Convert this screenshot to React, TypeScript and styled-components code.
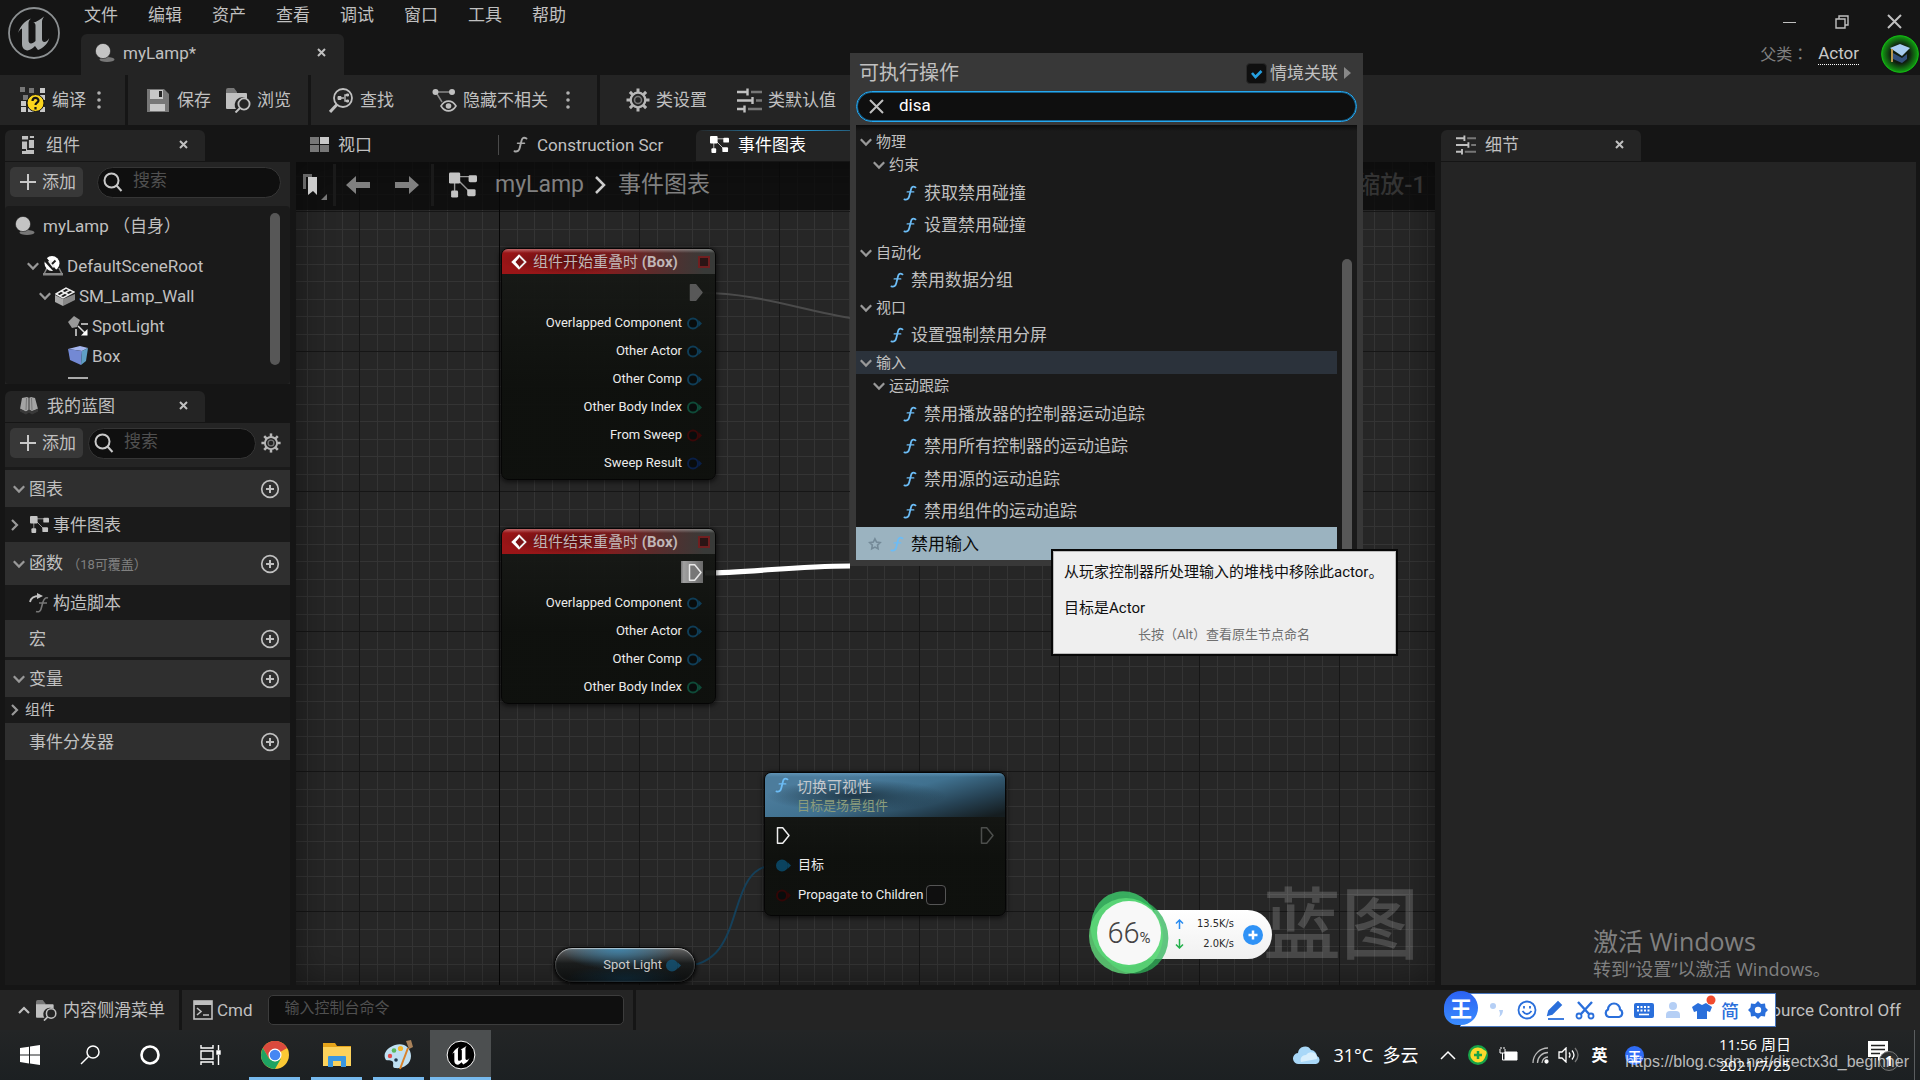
import React from "react";
import styled, { createGlobalStyle, css } from "styled-components";

const UI_FONT = `Roboto, "Noto Sans CJK SC", sans-serif`;
const WIN_FONT = `"Open Sans", "Noto Sans CJK SC", sans-serif`;

const Global = createGlobalStyle`
  * { box-sizing: border-box; }
  html, body { margin: 0; height: 100%; background: #151515; }
  body { font-family: ${UI_FONT}; font-size: 17px; line-height: 24px; color: #c0c0c0; overflow: hidden; }
  button { font: inherit; color: inherit; background: none; border: 0; padding: 0; margin: 0; text-align: left; white-space: nowrap; }
  input { font: inherit; color: inherit; margin: 0; }
  ul { list-style: none; margin: 0; padding: 0; }
  h2, p { margin: 0; font-weight: 400; }
  svg { display: block; flex: none; }
`;

/* ---------- shell ---------- */
const Shell = styled.div`
  position: relative;
  display: grid;
  grid-template-rows: 75px 50px minmax(0, 1fr) 40px 50px;
  height: 100vh;
  background: #151515;
  overflow: hidden;
`;
const Header = styled.header`
  display: flex;
`;
const LogoBox = styled.div`
  width: 81px;
  padding: 6px 0 0 7px;
`;
const HeaderLeft = styled.div`
  flex: 1;
  display: flex;
  flex-direction: column;
  justify-content: space-between;
`;
const MenuBar = styled.nav`
  display: flex;
  height: 30px;
  padding-left: 3px;
  gap: 30px;
  align-items: center;
`;
const HeaderRight = styled.div`
  display: flex;
  flex-direction: column;
  align-items: flex-end;
`;
const WindowButtons = styled.div`
  display: flex;
  height: 43px;
  padding: 0 18px 0 0;
  gap: 38px;
  align-items: center;
`;
const ParentClass = styled.div`
  display: flex;
  align-items: flex-start;
  gap: 10px;
  padding-right: 61px;
  font-family: Roboto, "Noto Sans CJK TC", sans-serif;
  font-size: 16px;
  color: #808080;
  a {
    color: #c8c8c8;
    font-size: 17px;
    line-height: 21px;
    text-decoration: none;
    border-bottom: 1px dotted #fff;
  }
`;
const TutorialBadge = styled.button`
  position: absolute;
  top: 35px;
  right: 1px;
`;

const TabShape = styled.div<{ $width: number }>`
  display: flex;
  align-items: center;
  width: ${(p) => p.$width}px;
  height: 31px;
  padding: 0 17px 2px 15px;
  gap: 9px;
  border-radius: 6px 6px 0 0;
  background: #242424;
  margin-bottom: 1px;
  > span { flex: 1; white-space: nowrap; overflow: hidden; }
`;
const DocTab = styled(TabShape)`
  height: 41px;
  padding: 0 18px 4px 14px;
  gap: 8px;
  margin: 0;
`;

/* ---------- toolbar ---------- */
const Toolbar = styled.div`
  display: flex;
  gap: 3px;
`;
const ToolGroup = styled.div<{ $pad: string; $gap: number; $grow?: boolean }>`
  display: flex;
  align-items: center;
  gap: ${(p) => p.$gap}px;
  padding: ${(p) => p.$pad};
  background: #242424;
  flex: ${(p) => (p.$grow ? "1" : "none")};
`;
const ToolButton = styled.button`
  display: flex;
  align-items: center;
  gap: 6px;
`;
const ToolPair = styled.div`
  display: flex;
  align-items: center;
  gap: 18px;
`;

/* ---------- main columns ---------- */
const Main = styled.main`
  display: grid;
  grid-template-columns: 285px minmax(0, 1fr) 475px;
  gap: 6px;
  padding: 5px 4px 5px 5px;
  min-height: 0;
`;
const Column = styled.section`
  display: flex;
  flex-direction: column;
  min-height: 0;
  min-width: 0;
`;
const ComponentsPanel = styled.div`
  display: flex;
  flex-direction: column;
  height: 222px;
  margin-bottom: 7px;
  background: #242424;
`;
const BlueprintPanel = styled.div`
  flex: 1;
  background: #1a1a1a;
`;
const SearchRow = styled.div`
  display: flex;
  align-items: center;
  height: 44px;
  padding: 0 9px 4px 5px;
  background: #242424;
`;
const AddButton = styled.button`
  display: flex;
  align-items: center;
  gap: 5px;
  width: 73px;
  height: 30px;
  padding-left: 9px;
  border-radius: 5px;
  background: #383838;
  flex: none;
`;
const SearchBox = styled.label<{ $ml: number }>`
  display: flex;
  align-items: center;
  flex: 1;
  min-width: 0;
  height: 31px;
  margin-left: ${(p) => p.$ml}px;
  padding: 0 5px;
  gap: 10px;
  border: 1px solid #353535;
  border-radius: 16px;
  background: #0f0f0f;
  input {
    flex: 1;
    min-width: 0;
    padding: 0 0 4px;
    border: 0;
    outline: 0;
    background: none;
    &::placeholder { color: #505050; opacity: 1; }
  }
`;
const TreeBox = styled.div`
  flex: 1;
  display: flex;
  min-height: 0;
  overflow: hidden;
  background: #1a1a1a;
  border-radius: 4px;
`;
const TreeList = styled.ul`
  flex: 1;
`;
const TreeItem = styled.li<{ $indent: number; $root?: boolean }>`
  display: flex;
  align-items: center;
  height: ${(p) => (p.$root ? 40 : 30)}px;
  margin-bottom: ${(p) => (p.$root ? 5 : 0)}px;
  padding-left: ${(p) => p.$indent}px;
  gap: ${(p) => (p.$root ? 8 : 4)}px;
  white-space: nowrap;
`;
const Thumb = styled.div<{ $h?: number; $mt: number; $mr: number }>`
  width: 10px;
  height: ${(p) => (p.$h ? `${p.$h}px` : "auto")};
  margin: ${(p) => `${p.$mt}px ${p.$mr}px 0 0`};
  border-radius: 5px;
  background: #575757;
`;
const Section = styled.div<{ $h: number; $head?: boolean; $pl: number; $gap?: number; $small?: boolean }>`
  display: flex;
  align-items: center;
  height: ${(p) => p.$h}px;
  padding: 0 10px 0 ${(p) => p.$pl}px;
  gap: ${(p) => p.$gap ?? 4}px;
  background: ${(p) => (p.$head ? "#2f2f2f" : "#1a1a1a")};
  font-size: ${(p) => (p.$small ? 15 : 17)}px;
  small { font-size: 13px; color: #808080; }
  > span { flex: 1; }
`;
const Divider = styled.div`
  height: 3px;
  background: #1a1a1a;
`;

/* ---------- graph ---------- */
const EditorTabs = styled.div`
  display: flex;
  height: 32px;
  align-items: flex-start;
`;
const EditorTab = styled.button<{ $w: number; $active?: boolean }>`
  display: flex;
  align-items: center;
  gap: 9px;
  width: ${(p) => p.$w}px;
  height: 31px;
  padding: 0 32px 2px 14px;
  border-radius: 6px 6px 0 0;
  > span { overflow: hidden; }
  ${(p) =>
    p.$active &&
    css`
      color: #fff;
      background:
        linear-gradient(90deg, transparent, #26a0e0 50%, transparent) top / 100% 1px no-repeat,
        #242424;
    `}
`;
const TabRule = styled.i`
  width: 1px;
  height: 20px;
  margin-top: 5px;
  background: #4a4a4a;
`;
const Canvas = styled.div`
  position: relative;
  flex: 1;
  overflow: hidden;
  background:
    linear-gradient(#060606, #060606) 203px 0 / 1px 100% no-repeat,
    linear-gradient(90deg, #161616 1px, transparent 1px) 63px 0 / 140px 100%,
    linear-gradient(#161616 1px, transparent 1px) 0 49px / 100% 140px,
    linear-gradient(90deg, #343434 1px, transparent 1px 18px, #343434 18px 19px, transparent 19px) 28px 0 / 35px 100%,
    linear-gradient(#343434 1px, transparent 1px 18px, #343434 18px 19px, transparent 19px) 0 14px / 100% 35px,
    #262626;
`;
const Vignette = styled.div`
  position: absolute;
  inset: 0;
  box-shadow: inset 0 0 36px rgba(0, 0, 0, 0.45);
`;
const GraphTitle = styled.div`
  position: absolute;
  inset: 0 0 auto 0;
  display: flex;
  align-items: center;
  height: 48px;
  padding: 0 9px 2px 7px;
  background: rgba(8, 8, 8, 0.75);
  font-size: 23px;
  line-height: 30px;
  color: #808080;
`;
const TitleIcon = styled.div<{ $ml?: number }>`
  margin-left: ${(p) => p.$ml ?? 0}px;
`;
const TitleRule = styled.i<{ $ml: number }>`
  width: 3px;
  height: 42px;
  margin-left: ${(p) => p.$ml}px;
  background: #1a1a1a;
`;
const Crumb = styled.span<{ $ml: number }>`
  margin-left: ${(p) => p.$ml}px;
`;
const ZoomLabel = styled.span`
  margin-left: auto;
  font-weight: 500;
  font-size: 24px;
  color: #333;
`;
const Wires = styled.svg`
  position: absolute;
  left: 0;
  top: 0;
  width: 100%;
  height: 100%;
`;
const Node = styled.article<{ $x: number; $y: number; $w: number }>`
  position: absolute;
  left: ${(p) => p.$x}px;
  top: ${(p) => p.$y}px;
  width: ${(p) => p.$w}px;
  border: 1px solid #050505;
  border-radius: 7px;
  background: linear-gradient(rgba(24, 26, 23, 0.94), rgba(14, 16, 13, 0.97) 60%);
  box-shadow: 0 1px 5px 1px rgba(0, 0, 0, 0.6);
  color: #ececec;
  font-size: 13px;
  line-height: 20px;
  overflow: hidden;
`;
const EventHead = styled.header`
  display: flex;
  align-items: center;
  height: 25px;
  padding: 0 5px 0 9px;
  gap: 6px;
  font-size: 15px;
  color: #c0b6b6;
  background:
    linear-gradient(rgba(255, 255, 255, 0.35), transparent 4px),
    radial-gradient(ellipse 70px 14px at 32% 45%, rgba(50, 5, 5, 0.6), transparent),
    linear-gradient(95deg, #9b1517 5%, #8b1a1c 45%, #5b2c2c 72%, #383a38 95%);
  > span { flex: 1; }
`;
const DelegatePin = styled.i`
  width: 12px;
  height: 12px;
  border: 2px solid #701f20;
  background: #2b1515;
`;
const NodeBody = styled.div`
  padding: 4px 0 2px;
`;
const ExecRow = styled.div`
  display: flex;
  justify-content: flex-end;
  align-items: center;
  height: 31px;
  padding: 0 12px 3px 0;
`;
const ExecSelected = styled.span`
  display: flex;
  justify-content: flex-end;
  align-items: center;
  width: 22px;
  height: 22px;
  padding-right: 1px;
  background: linear-gradient(90deg, #777, #a0a0a0 12%, #6a6a6a);
`;
const PinRow = styled.div`
  display: flex;
  justify-content: flex-end;
  align-items: center;
  height: 28px;
  padding-right: 13px;
  gap: 5px;
`;
const FuncHead = styled.header`
  display: flex;
  height: 44px;
  padding: 4px 10px 0 10px;
  gap: 8px;
  color: #c4c8cc;
  font-size: 15px;
  background:
    linear-gradient(rgba(140, 200, 240, 0.3), transparent 4px),
    radial-gradient(ellipse 90px 16px at 38% 52%, rgba(20, 35, 45, 0.75), transparent),
    linear-gradient(165deg, #4c7c9c 20%, #40718f 50%, #264254 75%, #151d20 96%);
  small { display: block; font-size: 13px; line-height: 18px; color: #8b9c7c; }
`;
const FuncBody = styled.div`
  padding: 3px 12px 5px 11px;
`;
const FuncRow = styled.div`
  display: flex;
  align-items: center;
  height: 30px;
  gap: 7px;
`;
const NodeCheck = styled.input`
  appearance: none;
  width: 20px;
  height: 20px;
  border: 1px solid #555;
  border-radius: 4px;
  background: #0f0f0f;
`;
const PinLabel = styled.label`
  display: flex;
  align-items: center;
  gap: 3px;
`;
const VarNode = styled.article`
  position: absolute;
  left: 258px;
  top: 785px;
  display: flex;
  align-items: center;
  justify-content: flex-end;
  gap: 4px;
  width: 142px;
  height: 36px;
  padding-right: 14px;
  border: 1px solid #050505;
  border-radius: 18px;
  background:
    radial-gradient(ellipse 58px 22px at 45% 0, rgba(60, 140, 185, 0.85), transparent),
    radial-gradient(ellipse 60px 14px at 50% 90%, rgba(15, 50, 70, 0.7), transparent),
    linear-gradient(#666 0, #3c3e3f 25%, #1c1e1e 45%, #101212);
  box-shadow: inset 0 1px 1px rgba(255, 255, 255, 0.5), inset 0 0 2px rgba(255, 255, 255, 0.4), 0 1px 4px #000;
  color: #d8d8d8;
  font-size: 13px;
`;
const BlueprintMark = styled.div`
  position: absolute;
  right: 16px;
  bottom: 16px;
  font: 500 78px/100px "Noto Sans CJK SC", sans-serif;
  color: rgba(255, 255, 255, 0.17);
`;
const Details = styled.div`
  flex: 1;
  background: #242424;
`;

/* ---------- status bar ---------- */
const StatusBar = styled.footer`
  display: flex;
  gap: 3px;
`;
const StatusGroup = styled.div<{ $pad: string; $gap: number; $grow?: boolean }>`
  display: flex;
  align-items: center;
  gap: ${(p) => p.$gap}px;
  padding: ${(p) => p.$pad};
  background: #242424;
  flex: ${(p) => (p.$grow ? "1" : "none")};
  justify-content: ${(p) => (p.$grow ? "flex-end" : "flex-start")};
`;
const Console = styled.input`
  width: 356px;
  height: 30px;
  margin-left: 11px;
  padding: 0 16px 4px;
  border: 1px solid #3c3c3c;
  border-radius: 5px;
  background: #0f0f0f;
  font-size: 15px;
  &::placeholder { color: #505050; opacity: 1; }
`;

/* ---------- action menu ---------- */
const Menu = styled.section`
  position: absolute;
  left: 850px;
  top: 53px;
  width: 513px;
  height: 513px;
  display: flex;
  flex-direction: column;
  padding: 0 6px 6px;
  background: #383838;
`;
const MenuHead = styled.div`
  display: flex;
  align-items: center;
  height: 38px;
  padding: 2px 6px 0 3px;
  h2 { flex: 1; font-size: 20px; line-height: 28px; }
`;
const ContextLabel = styled.label`
  display: flex;
  align-items: center;
  gap: 3px;
  margin-right: 6px;
`;
const ContextCheck = styled.input`
  appearance: none;
  width: 21px;
  height: 21px;
  border: 1px solid #2a2a2a;
  border-radius: 4px;
  background: #0f0f0f url("data:image/svg+xml,%3Csvg xmlns='http://www.w3.org/2000/svg' viewBox='0 0 19 19'%3E%3Cpath d='M5 9l3.500 4 6-6' fill='none' stroke='%2326a0e0' stroke-width='2.600'/%3E%3C/svg%3E") center / 19px 19px;
`;
const MenuSearch = styled.label`
  display: flex;
  align-items: center;
  height: 31px;
  margin-bottom: 3px;
  padding: 0 12px;
  gap: 15px;
  border: 1px solid #26a8f0;
  box-shadow: inset 0 0 0 1px #14608c;
  border-radius: 16px;
  background: #0f0f0f;
  input { flex: 1; border: 0; outline: 0; padding: 0 0 3px; background: none; color: #fff; }
`;
const MenuBody = styled.div`
  flex: 1;
  display: flex;
  min-height: 0;
  overflow: hidden;
  background: linear-gradient(#0c0c0c, #1a1a1a 6px);
`;
const MenuList = styled.ul`
  flex: 1;
  padding-top: 5px;
  margin-right: 5px;
`;
const Category = styled.li<{ $level: number; $hot?: boolean }>`
  display: flex;
  align-items: center;
  gap: 4px;
  height: 23px;
  padding-left: ${(p) => 4 + p.$level * 13}px;
  font-size: 15px;
  background: ${(p) => (p.$hot ? "#2b323b" : "none")};
`;
const Action = styled.li<{ $level: number; $picked?: boolean }>`
  display: flex;
  align-items: center;
  height: 33px;
  padding-left: ${(p) => (p.$picked ? 12 : 21 + p.$level * 13)}px;
  gap: 7px;
  color: ${(p) => (p.$picked ? "#0b0b0b" : "#c0c0c0")};
  background: ${(p) => (p.$picked ? "#9bb3c0" : "none")};
  &:nth-child(even) { height: 32px; }
`;
const Tooltip = styled.div`
  position: absolute;
  left: 1051px;
  top: 549px;
  width: 347px;
  padding: 9px 12px 8px 11px;
  border: 2px solid #080808;
  background: #efefef;
  box-shadow: inset 0 0 0 1px #bbb;
  color: #101010;
  font-size: 15px;
  line-height: 24px;
  white-space: nowrap;
  p + p { margin-top: 12px; }
  small { display: block; margin-top: 4px; font-size: 13px; line-height: 22px; text-align: center; color: #707070; }
`;

/* ---------- desktop overlays ---------- */
const Activate = styled.div`
  position: absolute;
  left: 1593px;
  top: 924px;
  font: 25px/34px ${WIN_FONT};
  color: #808080;
  small { display: block; font-size: 18px; line-height: 22px; }
`;
const SpeedWidget = styled.div`
  position: absolute;
  left: 1088px;
  top: 889px;
  width: 184px;
  height: 88px;
`;
const SpeedPill = styled.div`
  position: absolute;
  inset: 21px 0 18px 40px;
  display: flex;
  align-items: center;
  justify-content: flex-end;
  gap: 9px;
  padding-right: 9px;
  border-radius: 25px;
  background: linear-gradient(#fff, #f0f0f0);
  color: #2a2a2a;
`;
const SpeedLines = styled.div`
  display: grid;
  grid-template-columns: 9px 50px;
  align-items: center;
  padding-bottom: 2px;
  font: 11px/20px "DejaVu Sans Condensed", "DejaVu Sans", sans-serif;
  text-align: right;
`;
const SpeedDial = styled.div`
  position: absolute;
  inset: 12px auto auto 9px;
  width: 64px;
  height: 64px;
  display: flex;
  align-items: baseline;
  justify-content: center;
  padding-top: 12px;
  border-radius: 50%;
  background: #f8f8f8;
  font: 300 29px/40px Roboto, sans-serif;
  color: #444;
  small { font-size: 15px; font-weight: 400; }
`;
const SpeedRing = styled.svg`
  position: absolute;
  left: 0;
  top: 0;
`;
const ImeBar = styled.div`
  position: absolute;
  left: 1460px;
  top: 993px;
  width: 316px;
  height: 34px;
  display: flex;
  align-items: center;
  padding: 0 7px 0 27px;
  justify-content: space-between;
  border: 1px solid #4a78c0;
  background: #fff;
  color: #2a6fdb;
`;
const ImeLogo = styled.div`
  position: absolute;
  left: -17px;
  top: -3px;
  width: 34px;
  height: 34px;
  border-radius: 50% 50% 50% 40%;
  background: linear-gradient(#2c62f2, #3a8cff);
  color: #fff;
  font: 700 22px/33px "Noto Sans CJK SC", sans-serif;
  text-align: center;
`;
const ImeMode = styled.span`
  font: 500 18px/24px "Noto Sans CJK SC", sans-serif;
`;
const Taskbar = styled.footer`
  position: relative;
  display: flex;
  align-items: stretch;
  background: linear-gradient(#232526, #1c2022);
  color: #fff;
  font-family: ${WIN_FONT};
`;
const TaskButton = styled.button<{ $w: number; $open?: boolean; $active?: boolean; $ml?: number }>`
  display: flex;
  align-items: center;
  justify-content: center;
  width: ${(p) => p.$w}px;
  margin-left: ${(p) => p.$ml ?? 0}px;
  border-bottom: 3px solid ${(p) => (p.$open ? "#76b9ed" : "transparent")};
  padding-top: 3px;
  background: ${(p) => (p.$active ? "#4c4f50" : "none")};
  background-clip: padding-box;
`;
const Tray = styled.div`
  margin-left: auto;
  display: flex;
  align-items: center;
  padding-right: 5px;
  font-size: 18px;
`;
const TrayItem = styled.span<{ $w: number }>`
  display: flex;
  justify-content: center;
  width: ${(p) => p.$w}px;
  white-space: pre;
`;
const InputMode = styled(TrayItem)`
  font-size: 16px;
  font-weight: 700;
`;
const TrayBadge = styled.span`
  width: 19px;
  height: 19px;
  border-radius: 50%;
  background: #2f6cf6;
  font: 700 13px/19px "Noto Sans CJK SC", sans-serif;
  text-align: center;
`;
const Clock = styled.div`
  width: 112px;
  margin-left: 42px;
  font-size: 15px;
  line-height: 21px;
  text-align: center;
`;
const Notice = styled.div`
  display: flex;
  justify-content: flex-end;
  width: 103px;
  padding-right: 14px;
`;
const ShowDesktop = styled.div`
  width: 1px;
  height: 50px;
  background: #5a5d5f;
`;
const BlogMark = styled.div`
  position: absolute;
  right: 11px;
  bottom: 7px;
  font: 16px/22px "Liberation Sans", sans-serif;
  color: rgba(255, 255, 255, 0.7);
`;

/* ---------- icons ---------- */
const Chevron = ({ dir = "down", color = "#999" }: { dir?: "down" | "right" | "up"; color?: string }) => (
  <svg width="12" height="12" viewBox="0 0 12 12" fill="none" stroke={color} strokeWidth="2.200">
    <path d={dir === "down" ? "M.8 3.200L6 8.600l5.200-5.400" : dir === "up" ? "M1 9l5-5 5 5" : "M3 1l5 5-5 5"} />
  </svg>
);
const Close = ({ size = 9, w = 2 }: { size?: number; w?: number }) => (
  <svg width={size} height={size} viewBox={`0 0 ${size} ${size}`} stroke="currentColor" strokeWidth={w}>
    <path d={`M1 1L${size - 1} ${size - 1}M${size - 1} 1L1 ${size - 1}`} />
  </svg>
);
const FuncIcon = ({ color = "#6cbcf5", size = 15 }: { color?: string; size?: number }) => (
  <svg width={size} height={size + 2} viewBox="0 0 15 17" fill="none" stroke={color} strokeWidth="1.900" strokeLinecap="round">
    <path d="M13.500 2.500c-2.600-1.600-4.300-.6-4.900 1.900L6.700 12c-.6 2.600-2.200 4-5.200 3.300" />
    <path d="M4.500 7.300h7" strokeWidth="1.500" />
  </svg>
);
const Sphere = () => (
  <svg width="20" height="20" viewBox="0 0 20 20">
    <ellipse cx="12" cy="16.500" rx="7.500" ry="2.600" fill="#777" />
    <circle cx="8" cy="8" r="7.600" fill="#c4c4c4" stroke="#1c1c1c" strokeWidth=".6" />
  </svg>
);
const Magnifier = () => (
  <svg width="20" height="20" viewBox="0 0 20 20" fill="none" stroke="#c8c8c8" strokeWidth="2">
    <circle cx="8.500" cy="8.500" r="7" />
    <path d="M13.500 13.500l5 5.500" />
  </svg>
);
const Plus = () => (
  <svg width="18" height="18" viewBox="0 0 18 18" stroke="#c8c8c8" strokeWidth="2">
    <path d="M9 1v16M1 9h16" />
  </svg>
);
const PlusRing = () => (
  <svg width="20" height="20" viewBox="0 0 20 20" stroke="#c0c0c0" strokeWidth="1.700" fill="none">
    <circle cx="10" cy="10" r="8.300" />
    <path d="M10 6v8M6 10h8" strokeWidth="2" />
  </svg>
);
const Gear = ({ size = 24 }: { size?: number }) => (
  <svg width={size} height={size} viewBox="0 0 24 24" fill="none" stroke="#b8b8b8">
    <circle cx="12" cy="12" r="7.300" strokeWidth="2.300" />
    <circle cx="12" cy="12" r="3.500" strokeWidth="1.600" stroke="#777" />
    {[0, 45, 90, 135, 180, 225, 270, 315].map((a) => (
      <path key={a} d="M12 .5v4" strokeWidth="3" transform={`rotate(${a} 12 12)`} />
    ))}
  </svg>
);
const Dots = () => (
  <svg width="4" height="20" viewBox="0 0 4 20" fill="#b0b0b0">
    <circle cx="2" cy="3" r="1.800" /><circle cx="2" cy="10" r="1.800" /><circle cx="2" cy="17" r="1.800" />
  </svg>
);
const Sliders = ({ size = 25 }: { size?: number }) => (
  <svg width={size} height={size} viewBox="0 0 25 25" strokeWidth="2.400">
    <path d="M14 4h11M19 12.500h6M11 21h14" stroke="#777" />
    <path d="M0 4h10M0 12.500h15M0 21h7M10.500 .5v7M15.500 9v7M7.500 17.500v7" stroke="#c0c0c0" />
  </svg>
);
const GraphIcon = ({ w = 19, color = "#c4c4c4" }: { w?: number; color?: string }) => (
  <svg width={w} height={w} viewBox="0 0 20 20" fill={color}>
    <path d="M4 4h13M4 4v13M5 5l11 11" stroke={color} strokeWidth="1" fill="none" opacity=".75" />
    <rect x="0" y="1" width="8" height="8" rx="1" />
    <rect x="14" y="3" width="6" height="5" rx="1" /><rect x="1.500" y="14" width="5" height="5" rx="1" /><rect x="13" y="13" width="6" height="5" rx="1" />
  </svg>
);
const FolderSearch = ({ size = 25 }: { size?: number }) => (
  <svg width={size} height={size} viewBox="0 0 25 25">
    <path d="M0 6V2q0-2 2-2h6l3 4v2z" fill="#777" />
    <path d="M0 5h20q1 0 1 1v5a7.500 7.500 0 00-11 10H1q-1 0-1-1z" fill="#c0c0c0" />
    <circle cx="18" cy="16" r="5.600" fill="#242424" stroke="#c0c0c0" strokeWidth="1.800" />
    <path d="M14 20l-4.500 4.500" stroke="#c0c0c0" strokeWidth="2" />
  </svg>
);
const ExecPin = ({ fill = "none", stroke = "#eee" }: { fill?: string; stroke?: string }) => (
  <svg width="14" height="17" viewBox="0 0 14 17">
    <path d="M1.500 .8h5.200L13 8.500l-6.300 7.700H1.500z" fill={fill} stroke={stroke} strokeWidth="1.500" strokeLinejoin="round" />
  </svg>
);
const DataPin = ({ color, filled }: { color: string; filled?: boolean }) => (
  <svg width="15" height="13" viewBox="0 0 15 13">
    <circle cx="6" cy="6.500" r="5" stroke={color} strokeWidth="2" fill={filled ? color : "#090c0c"} />
    <path d="M11.500 3l3.500 3.500-3.500 3.500z" fill={color} />
  </svg>
);
const EngineU = ({ size, fill, ring, bg = "none" }: { size: number; fill: string; ring: string; bg?: string }) => (
  <svg width={size} height={size} viewBox="0 0 54 54">
    <circle cx="27" cy="27" r="25" fill={bg} stroke={ring} strokeWidth="1.800" />
    <path
      fill={fill}
      d="M11 27C13 20 18 15 24 12.500c-2 2-2.500 3-2.500 5V34c0 2 .8 3.500 2.500 3.500 1.500 0 3-1 4.500-2.500V19.500c0-1.500-.6-2.500-2.200-2.700C30 15.500 33.500 13.500 37 10.500c-1.500 2.500-2 3.500-2 5.500v17c0 2 1 3 2.300 3 1.800 0 3.500-1.500 5-4-1.500 6-6.300 10-11.300 12l-3-4c-2 2-4 4-7.500 4.500-3.500-.5-5.500-3-5.500-6.500V22.500c-1.500.5-2.800 2-4 4.500z"
    />
  </svg>
);
const CompileIcon = () => (
  <svg width="26" height="26" viewBox="0 0 26 26">
    <g fill="#777"><path d="M0 0h5v5H0zM9 1h5v5H9zM3 8h5v5H3z" /></g>
    <g fill="#c8c8c8"><path d="M20 1h5v5h-5zM11 8h5v5h-5zM19 8h6v5h-6zM1 14h5v5H1zM1 20h5v5H1zM8 20h6v5H8zM20 20h5v5h-5z" /></g>
    <circle cx="15.500" cy="16" r="8.500" fill="#fbd51d" stroke="#151515" />
    <path d="M12.500 14c0-4 6-4 6-.5 0 2-3 2.300-3 4.500M15.500 20v2.500" fill="none" stroke="#151515" strokeWidth="2.200" />
  </svg>
);
const SaveIcon = () => (
  <svg width="24" height="23" viewBox="0 0 24 23">
    <path d="M0 0h17l5 5v18H0z" fill="#777" />
    <path d="M3 1h13v9H3zM3 15h15v7H3z" fill="#c8c8c8" />
    <path d="M12 2h3v6h-3z" fill="#242424" />
  </svg>
);
const FindIcon = () => (
  <svg width="25" height="25" viewBox="0 0 25 25" fill="none" stroke="#c0c0c0">
    <circle cx="14" cy="10" r="9" strokeWidth="1.800" />
    <path d="M8 16.500L1 24" strokeWidth="3" />
    <path d="M11 10h4M18.500 7H16v6h2.500" strokeWidth="1.400" />
    <path d="M9 8.500h3v3H9zM17.500 6h2v2h-2zM17.500 12h2v2h-2z" fill="#c0c0c0" strokeWidth="1" />
  </svg>
);
const HideIcon = () => (
  <svg width="25" height="25" viewBox="0 0 25 25" fill="none" stroke="#c0c0c0">
    <path d="M3 4h16M5 6l5 8" strokeWidth="1.500" stroke="#888" />
    <circle cx="3.500" cy="4" r="3" fill="#c0c0c0" stroke="none" /><circle cx="20" cy="4" r="3" fill="#c0c0c0" stroke="none" />
    <path d="M9 18c4-6.500 11-6.500 15 0-4 6.500-11 6.500-15 0z" strokeWidth="1.600" />
    <circle cx="16.500" cy="18" r="2.800" fill="#c0c0c0" stroke="none" />
  </svg>
);
const ComponentsIcon = () => (
  <svg width="17" height="18" viewBox="0 0 17 18">
    <path d="M2 0h12v18H2z" fill="#c0c0c0" />
    <path d="M2 4.500h6V13h6M9 0v3h5M2 14h4" fill="none" stroke="#242424" strokeWidth="1.800" />
  </svg>
);
const BookIcon = () => (
  <svg width="18" height="18" viewBox="0 0 18 18">
    <path d="M2 1l5-1 2 1 2-1 4 1 3 11-6 2-3-1-3 2-6-3z" fill="#a4a4a4" />
    <path d="M6.500 1L6 13M11.500 1l.5 12" stroke="#777" />
    <path d="M9 1v12M0 12l6 3 3-2 3 2 6-3v2l-6 3-3-2-3 2-6-3z" stroke="#3a3a3a" fill="#3a3a3a" />
  </svg>
);
const ViewportIcon = () => (
  <svg width="19" height="15" viewBox="0 0 19 15" fill="#777">
    <path d="M0 0h9v7H0zM0 8h9v7H0zM10 8h9v7h-9z" /><path d="M10 0h9v7h-9z" fill="#c8c8c8" />
  </svg>
);
const SceneRootIcon = () => (
  <svg width="20" height="20" viewBox="0 0 20 20">
    <path d="M4 12L1 18M16 12l3 6" stroke="#888" strokeWidth="1.500" />
    <path d="M0 17h20v2.500H0z" fill="#888" />
    <circle cx="9" cy="7.500" r="7.500" fill="#fff" />
    <path d="M1 5l10 11h4L3 1z" fill="#1a1a1a" />
    <path d="M5 5.500L8 4l4 6-2 2z" fill="#eee" />
    <path d="M9 8l3.500-3.500" stroke="#1a1a1a" strokeWidth="2" />
  </svg>
);
const MeshIcon = () => (
  <svg width="20" height="19" viewBox="0 0 20 19">
    <path d="M0 8l8 4v7l-8-4z" fill="#aaa" /><path d="M8 12l12-5v6L8 19z" fill="#888" />
    <path d="M1 7l10-6 8 4-11 6zM6 4l8 4M4.500 9L15 3" fill="none" stroke="#eee" strokeWidth="1.500" />
  </svg>
);
const SpotIcon = () => (
  <svg width="20" height="20" viewBox="0 0 20 20">
    <path d="M6 0l6 4-3 7-5 1L0 6z" fill="#999" />
    <path d="M13 8h7M8 13v7M10 10l7 7" stroke="#ddd" strokeWidth="1.500" /><path d="M19.500 13v6.500H13z" fill="#fff" />
  </svg>
);
const BoxIcon = () => (
  <svg width="20" height="20" viewBox="0 0 20 20">
    <path d="M0 3l12-3 8 2-6 3z" fill="#a5b6ee" /><path d="M0 3l14 2-1 14L2 14z" fill="#7389d4" /><path d="M14 5l6-3-2 13-5 4z" fill="#5f9fc4" />
  </svg>
);
const OverrideIcon = () => (
  <svg width="20" height="20" viewBox="0 0 20 20" fill="none">
    <path d="M1 9c1-5 5-6 9-6" stroke="#c4c4c4" strokeWidth="1.800" /><path d="M8 0l6 3-6 3z" fill="#c4c4c4" />
    <path d="M19 5c-3-1-4 1-5 4l-2 7c-.6 2-2 3.500-5 2.500M10 10h8" stroke="#777" strokeWidth="1.600" />
  </svg>
);
const Star = () => (
  <svg width="15" height="14" viewBox="0 0 26 24" fill="none" stroke="#748a98" strokeWidth="2.800">
    <path d="M12 3l2.800 5.700 6.200.9-4.500 4.400 1 6.200L12 17.300l-5.500 2.900 1-6.200L3 9.600l6.200-.9z" />
  </svg>
);
const TerminalIcon = () => (
  <svg width="20" height="20" viewBox="0 0 20 20" fill="none" stroke="#c0c0c0">
    <rect x="1" y="1" width="18" height="18" strokeWidth="1.600" /><path d="M1 3h18" strokeWidth="4" />
    <path d="M4 8l4 3.500L4 15M10 15h6" strokeWidth="1.600" />
  </svg>
);

const imeProps = { width: 20, height: 20, viewBox: "0 0 20 20", fill: "none", stroke: "currentColor", strokeWidth: 1.8 };

/* ---------- data ---------- */
const blue = "#0f3d57";
const overlapPins: [string, string][] = [
  ["Overlapped Component", blue],
  ["Other Actor", blue],
  ["Other Comp", blue],
  ["Other Body Index", "#0f4a38"],
  ["From Sweep", "#3a0808"],
  ["Sweep Result", "#0a1f47"],
];
type Entry = { t: string; cat?: boolean; level: number; hot?: boolean; picked?: boolean };
const entries: Entry[] = [
  { t: "物理", cat: true, level: 0 },
  { t: "约束", cat: true, level: 1 },
  { t: "获取禁用碰撞", level: 2 },
  { t: "设置禁用碰撞", level: 2 },
  { t: "自动化", cat: true, level: 0 },
  { t: "禁用数据分组", level: 1 },
  { t: "视口", cat: true, level: 0 },
  { t: "设置强制禁用分屏", level: 1 },
  { t: "输入", cat: true, level: 0, hot: true },
  { t: "运动跟踪", cat: true, level: 1 },
  { t: "禁用播放器的控制器运动追踪", level: 2 },
  { t: "禁用所有控制器的运动追踪", level: 2 },
  { t: "禁用源的运动追踪", level: 2 },
  { t: "禁用组件的运动追踪", level: 2 },
  { t: "禁用输入", level: 1, picked: true },
];

const EventNode = ({ y, title, pins, selected }: { y: number; title: string; pins: [string, string][]; selected?: boolean }) => (
  <Node $x={205} $y={y} $w={215}>
    <EventHead>
      <svg width="16" height="16" viewBox="0 0 16 16">
        <path d="M8 1.500l6.500 6.500L8 14.500 1.500 8z" fill="#7a1214" stroke="#eee" strokeWidth="1.800" />
        <path d="M8 1L1 8l7 7V12L4.500 8 8 4z" fill="#fff" />
      </svg>
      <span>{title} <b>(Box)</b></span>
      <DelegatePin />
    </EventHead>
    <NodeBody>
      <ExecRow>
        {selected ? <ExecSelected><ExecPin stroke="#e8e8e8" fill="#777" /></ExecSelected> : <ExecPin fill="#585858" stroke="#585858" />}
      </ExecRow>
      {pins.map(([label, color]) => (
        <PinRow key={label}>{label}<DataPin color={color} /></PinRow>
      ))}
    </NodeBody>
  </Node>
);

export default function App() {
  return (
    <Shell>
      <Global />
      <Header>
        <LogoBox><EngineU size={54} fill="#a4a8aa" ring="#8c9092" /></LogoBox>
        <HeaderLeft>
          <MenuBar>
            {["文件", "编辑", "资产", "查看", "调试", "窗口", "工具", "帮助"].map((m) => <button key={m}>{m}</button>)}
          </MenuBar>
          <DocTab $width={263}><Sphere /><span>myLamp*</span><button aria-label="关闭"><Close /></button></DocTab>
        </HeaderLeft>
        <HeaderRight>
          <WindowButtons>
            <button aria-label="最小化"><svg width="14" height="14" stroke="#c0c0c0"><path d="M0 7.500h13" /></svg></button>
            <button aria-label="还原"><svg width="14" height="14" fill="none" stroke="#c0c0c0" strokeWidth="1.400"><path d="M1 4h9v9H1zM4 4V1h9v9h-3" /></svg></button>
            <button aria-label="关闭窗口"><Close size={15} w={2} /></button>
          </WindowButtons>
          <ParentClass>父类：<a href="#actor">Actor</a></ParentClass>
        </HeaderRight>
      </Header>

      <Toolbar>
        <ToolGroup $pad="0 24px 0 20px" $gap={11}>
          <ToolButton><CompileIcon />编译</ToolButton>
          <button aria-label="编译选项"><Dots /></button>
        </ToolGroup>
        <ToolGroup $pad="0 17px 0 19px" $gap={15}>
          <ToolButton><SaveIcon />保存</ToolButton>
          <ToolButton><FolderSearch />浏览</ToolButton>
        </ToolGroup>
        <ToolGroup $pad="0 27px 0 18px" $gap={38}>
          <ToolButton><FindIcon />查找</ToolButton>
          <ToolPair>
            <ToolButton><HideIcon />隐藏不相关</ToolButton>
            <button aria-label="隐藏选项"><Dots /></button>
          </ToolPair>
        </ToolGroup>
        <ToolGroup $pad="0 0 0 26px" $gap={30} $grow>
          <ToolButton><Gear />类设置</ToolButton>
          <ToolButton><Sliders />类默认值</ToolButton>
        </ToolGroup>
      </Toolbar>

      <Main>
        <Column>
          <TabShape $width={200}><ComponentsIcon /><span>组件</span><button aria-label="关闭组件"><Close /></button></TabShape>
          <ComponentsPanel>
            <SearchRow>
              <AddButton><Plus />添加</AddButton>
              <SearchBox $ml={14}><Magnifier /><input placeholder="搜索" aria-label="搜索组件" /></SearchBox>
            </SearchRow>
            <TreeBox>
              <TreeList>
                <TreeItem $indent={10} $root><Sphere />myLamp （自身）</TreeItem>
                <TreeItem $indent={22}><Chevron /><SceneRootIcon />DefaultSceneRoot</TreeItem>
                <TreeItem $indent={34}><Chevron /><MeshIcon />SM_Lamp_Wall</TreeItem>
                <TreeItem $indent={63}><SpotIcon />SpotLight</TreeItem>
                <TreeItem $indent={63}><BoxIcon />Box</TreeItem>
                <TreeItem $indent={63}><svg width="20" height="18" stroke="#aaa" fill="none" strokeWidth="2"><path d="M0 1h20" /></svg></TreeItem>
              </TreeList>
              <Thumb $h={152} $mt={7} $mr={10} />
            </TreeBox>
          </ComponentsPanel>

          <TabShape $width={200}><BookIcon /><span>我的蓝图</span><button aria-label="关闭我的蓝图"><Close /></button></TabShape>
          <BlueprintPanel>
            <SearchRow>
              <AddButton><Plus />添加</AddButton>
              <SearchBox $ml={5}><Magnifier /><input placeholder="搜索" aria-label="搜索蓝图" /></SearchBox>
              <TitleIcon $ml={5}><Gear size={20} /></TitleIcon>
            </SearchRow>
            <Divider />
            <Section $h={37} $head $pl={8}><Chevron /><span>图表</span><button aria-label="添加图表"><PlusRing /></button></Section>
            <Section $h={35} $pl={4} $gap={0}><Chevron dir="right" /><TitleIcon $ml={9}><GraphIcon /></TitleIcon><Crumb $ml={4}>事件图表</Crumb></Section>
            <Section $h={43} $head $pl={8}><Chevron /><span>函数 <small>（18可覆盖）</small></span><button aria-label="添加函数"><PlusRing /></button></Section>
            <Section $h={35} $pl={24}><OverrideIcon /><span>构造脚本</span></Section>
            <Section $h={37} $head $pl={24}><span>宏</span><button aria-label="添加宏"><PlusRing /></button></Section>
            <Divider />
            <Section $h={37} $head $pl={8}><Chevron /><span>变量</span><button aria-label="添加变量"><PlusRing /></button></Section>
            <Section $h={26} $pl={4} $small><Chevron dir="right" /><span>组件</span></Section>
            <Section $h={37} $head $pl={24}><span>事件分发器</span><button aria-label="添加事件分发器"><PlusRing /></button></Section>
          </BlueprintPanel>
        </Column>

        <Column>
          <EditorTabs>
            <EditorTab $w={202}><ViewportIcon />视口</EditorTab>
            <TabRule />
            <EditorTab $w={197}><FuncIcon color="#a8a8a8" /><span>Construction Script</span></EditorTab>
            <EditorTab $w={200} $active><GraphIcon color="#fff" />事件图表</EditorTab>
          </EditorTabs>
          <Canvas>
            <Wires>
              <path d="M407 131C460 131 500 147 560 157" fill="none" stroke="#4b4b4b" strokeWidth="2" />
              <path d="M409 411C450 411 500 404 554 404" fill="none" stroke="#fff" strokeWidth="5" />
              <path d="M386 804C455 804 425 703 480 703" fill="none" stroke="#15405a" strokeWidth="2" />
            </Wires>
            <EventNode y={86} title="组件开始重叠时" pins={overlapPins} />
            <EventNode y={366} title="组件结束重叠时" pins={overlapPins.slice(0, 4)} selected />
            <Node $x={468} $y={610} $w={242}>
              <FuncHead><FuncIcon size={14} /><div>切换可视性<small>目标是场景组件</small></div></FuncHead>
              <FuncBody>
                <FuncRow><ExecPin /><TitleIcon $ml={183}><ExecPin stroke="#4c4e4c" /></TitleIcon></FuncRow>
                <FuncRow><DataPin color="#0b435f" filled />目标</FuncRow>
                <FuncRow><DataPin color="#320606" /><PinLabel>Propagate to Children<NodeCheck type="checkbox" /></PinLabel></FuncRow>
              </FuncBody>
            </Node>
            <VarNode>Spot Light<DataPin color="#174e6c" filled /></VarNode>
            <BlueprintMark>蓝图</BlueprintMark>
            <Vignette />
            <GraphTitle>
              <svg width="24" height="30" viewBox="0 0 24 30"><path d="M0 4h9v3H3v12H0z" fill="#666" /><path d="M5 7h9v18l-4-4-5 4z" fill="#ccc" /><path d="M24 24v6h-6z" fill="#777" /></svg>
              <TitleRule $ml={6} />
              <TitleIcon $ml={10}><svg width="24" height="20" fill="#808080"><path d="M0 10l10-9v6h14v6H10v6z" /></svg></TitleIcon>
              <TitleIcon $ml={25}><svg width="24" height="20" fill="#808080"><path d="M24 10L14 1v6H0v6h14v6z" /></svg></TitleIcon>
              <TitleRule $ml={12} />
              <TitleIcon $ml={15}><GraphIcon w={28} /></TitleIcon>
              <Crumb $ml={18}>myLamp</Crumb>
              <TitleIcon $ml={10}><svg width="12" height="20" fill="none" stroke="#ccc" strokeWidth="2.500"><path d="M2 2l8 8-8 8" /></svg></TitleIcon>
              <Crumb $ml={12}>事件图表</Crumb>
              <ZoomLabel>缩放-1</ZoomLabel>
            </GraphTitle>
          </Canvas>
        </Column>

        <Column>
          <TabShape $width={200}><Sliders size={20} /><span>细节</span><button aria-label="关闭细节"><Close /></button></TabShape>
          <Details />
        </Column>
      </Main>

      <StatusBar>
        <StatusGroup $pad="0 14px 0 18px" $gap={6}><Chevron dir="up" color="#c0c0c0" /><FolderSearch size={21} />内容侧滑菜单</StatusGroup>
        <StatusGroup $pad="0 9px 0 11px" $gap={4}><TerminalIcon />Cmd<Console placeholder="输入控制台命令" aria-label="控制台命令" /></StatusGroup>
        <StatusGroup $pad="0 19px" $gap={6} $grow>Source Control Off</StatusGroup>
      </StatusBar>

      <Taskbar>
        <TaskButton $w={60} aria-label="开始"><svg width="20" height="20" fill="#fff"><path d="M0 3l9-1.300V9.500H0zM10 1.500L20 0v9.500H10zM0 10.500h9v8L0 17zM10 10.500h10V20l-10-1.500z" /></svg></TaskButton>
        <TaskButton $w={60} aria-label="搜索"><svg width="20" height="20" fill="none" stroke="#fff" strokeWidth="1.500"><circle cx="13" cy="7" r="6" /><path d="M8.500 11.500L1 19" /></svg></TaskButton>
        <TaskButton $w={60} aria-label="Cortana"><svg width="20" height="20"><circle cx="10" cy="10" r="8.500" fill="none" stroke="#fff" strokeWidth="2.600" /></svg></TaskButton>
        <TaskButton $w={60} aria-label="任务视图"><svg width="21" height="20" fill="none" stroke="#fff" strokeWidth="1.400"><path d="M1 0v3h12V0M1 6h12v8H1zM1 20v-3h12v3M18.500 0v5M18.500 10v10" /><path d="M17 6h3v3h-3z" fill="#fff" /></svg></TaskButton>
        <TaskButton $w={51} $ml={9} $open aria-label="Chrome">
          <svg width="28" height="28" viewBox="0 0 28 28">
            <circle cx="14" cy="14" r="14" fill="#fbc934" />
            <path d="M14 14L1.900 7A14 14 0 0126.100 7z" fill="#db4a3d" /><path d="M14 7h12.100A14 14 0 001.900 7L8 17.500z" fill="#db4a3d" />
            <path d="M1.900 7A14 14 0 0014 28l6-10.500-6 3-6-3z" fill="#1ea362" />
            <circle cx="14" cy="14" r="6.500" fill="#fff" /><circle cx="14" cy="14" r="5.300" fill="#4587f3" />
          </svg>
        </TaskButton>
        <TaskButton $w={51} $ml={11} $open aria-label="文件资源管理器">
          <svg width="28" height="24" viewBox="0 0 28 24"><path d="M0 0h12l2 3H28V9H0z" fill="#e6a41a" /><path d="M0 4h28v19H0z" fill="#fcd25c" /><path d="M5 24V14q0-1 1-1h16q1 0 1 1v10h-5v-6h-8v6z" fill="#3a97e0" /></svg>
        </TaskButton>
        <TaskButton $w={51} $ml={11} $open aria-label="画图">
          <svg width="30" height="30" viewBox="0 0 30 30">
            <path d="M11 5c8-3 16 2 16 11S18 29 11 28c-4-1 0-5-3-7s-6 1-7-3C-1 12 5 7 11 5z" fill="#bfe0f2" />
            <circle cx="6" cy="16" r="2.200" fill="#e34b4b" /><circle cx="10" cy="10.500" r="2.300" fill="#5cb85c" /><circle cx="16.500" cy="8.500" r="2.600" fill="#f3b52c" /><circle cx="12" cy="20" r="1.800" fill="#22384d" />
            <path d="M24 8L16 29" stroke="#d9822b" strokeWidth="2" /><path d="M22 1l5-1 2 7-4 2z" fill="#a9825a" />
          </svg>
        </TaskButton>
        <TaskButton $w={61} $ml={6} $open $active aria-label="Unreal Engine"><EngineU size={30} fill="#fff" ring="#fff" bg="#000" /></TaskButton>

        <Tray>
          <TrayItem $w={34}><svg width="28" height="20" viewBox="0 0 28 20"><path d="M6 19a5.500 5.500 0 01-1-11 7 7 0 0113-3 6.500 6.500 0 016 6 4.200 4.200 0 01-1 8z" fill="#a9d8f8" /><path d="M8 17a5 5 0 015-7 6 6 0 0111 4" fill="#d9effc" /></svg></TrayItem>
          <TrayItem $w={104}>31°C  多云</TrayItem>
          <TrayItem $w={40}><svg width="16" height="10" fill="none" stroke="#fff" strokeWidth="1.500"><path d="M1 9l7-7 7 7" /></svg></TrayItem>
          <TrayItem $w={20}><svg width="20" height="20"><circle cx="10" cy="10" r="10" fill="#18a348" /><path d="M3 13A7.500 7.500 0 0110 2.500q4 0 6 2.500 4 1 2 5-2 7.500-8 7.500-3 0-5-2z" fill="#fbd82c" /><path d="M10 6v8M6 10h8" stroke="#18a348" strokeWidth="2.500" /></svg></TrayItem>
          <TrayItem $w={42}><svg width="20" height="16"><path d="M6 5h12v8H6z" fill="#fff" stroke="#fff" /><path d="M1 2v4h5V2M3.500 6v7H6M2 0v2M5 0v2" stroke="#fff" fill="none" /></svg></TrayItem>
          <TrayItem $w={20}><svg width="17" height="17" fill="none" stroke="#bbb" strokeWidth="1.300"><path d="M1 16A15 15 0 0116 1M5.500 16A10.500 10.500 0 0116 5.500M10 16a6 6 0 016-6" /><circle cx="14.500" cy="14.500" r="1.500" fill="#fff" stroke="#fff" /></svg></TrayItem>
          <TrayItem $w={37}><svg width="22" height="16" fill="none" stroke="#fff" strokeWidth="1.300"><path d="M1 5h3l4-4v14l-4-4H1zM11 5.500q2 2.500 0 5M14 3.500q4 4.500 0 9" /><path d="M17 1q6 7 0 14" stroke="#777" /></svg></TrayItem>
          <InputMode $w={25}>英</InputMode>
          <TrayItem $w={45}><TrayBadge>王</TrayBadge></TrayItem>
          <Clock>11:56 周日<br />2021/7/25</Clock>
          <Notice>
            <svg width="32" height="32" viewBox="0 0 32 32"><path d="M0 2h20v16h-7l-3 4v-4H0z" fill="#fff" /><path d="M3 6.500h14M3 10.500h14M3 14.500h9" stroke="#222" strokeWidth="1.300" /><circle cx="21" cy="22" r="9.500" fill="#2b2d2e" stroke="#777" /><text x="21" y="27" fontSize="14" fontWeight="700" fill="#fff" textAnchor="middle">1</text></svg>
          </Notice>
          <ShowDesktop />
        </Tray>
        <BlogMark>https://blog.csdn.net/directx3d_beginner</BlogMark>
      </Taskbar>

      <TutorialBadge aria-label="教程">
        <svg width="38" height="38" viewBox="0 0 38 38">
          <defs><radialGradient id="halo"><stop offset=".5" stopColor="#101c10" /><stop offset="1" stopColor="#12a012" /></radialGradient></defs>
          <circle cx="19" cy="19" r="18.300" fill="url(#halo)" stroke="#12c012" />
          <path d="M12 18l9 5 5-4v5l-5 4-9-4z" fill="#34507c" /><path d="M9 13l10-4 10 4-8 8z" fill="#a8cdf0" /><path d="M11 14v13" stroke="#b89850" strokeWidth="2" />
        </svg>
      </TutorialBadge>

      <Activate>激活 Windows<small>转到“设置”以激活 Windows。</small></Activate>

      <SpeedWidget>
        <SpeedPill>
          <SpeedLines>
            <svg width="9" height="10" stroke="#2a8cf0" fill="none" strokeWidth="1.500"><path d="M4.500 10V1M1 4.500L4.500 1 8 4.500" /></svg><span>13.5K/s</span>
            <svg width="9" height="10" stroke="#22b04a" fill="none" strokeWidth="1.500"><path d="M4.500 0v9M1 5.500L4.500 9 8 5.500" /></svg><span>2.0K/s</span>
          </SpeedLines>
          <svg width="20" height="20"><circle cx="10" cy="10" r="10" fill="#2f92f6" /><path d="M10 5.500v9M5.500 10h9" stroke="#fff" strokeWidth="2.500" /></svg>
        </SpeedPill>
        <SpeedRing width="84" height="88" viewBox="0 0 84 88">
          <ellipse cx="37" cy="40" rx="34" ry="38" fill="#3cc468" opacity=".85" transform="rotate(-14 37 40)" />
          <ellipse cx="45" cy="47" rx="35" ry="38" fill="#2fb45a" opacity=".75" transform="rotate(-20 45 47)" />
          <ellipse cx="38" cy="47" rx="37" ry="38" fill="#62dd7c" opacity=".8" />
        </SpeedRing>
        <SpeedDial>66<small>%</small></SpeedDial>
      </SpeedWidget>

      <Menu>
        <MenuHead>
          <h2>可执行操作</h2>
          <ContextLabel><ContextCheck type="checkbox" defaultChecked />情境关联</ContextLabel>
          <svg width="7" height="12" fill="#888"><path d="M0 0l7 6-7 6z" /></svg>
        </MenuHead>
        <MenuSearch><Close size={15} w={2} /><input defaultValue="disa" aria-label="搜索操作" /></MenuSearch>
        <MenuBody>
          <MenuList>
            {entries.map((e) =>
              e.cat ? (
                <Category key={e.t} $level={e.level} $hot={e.hot}><Chevron />{e.t}</Category>
              ) : (
                <Action key={e.t} $level={e.level} $picked={e.picked}>
                  {e.picked && <Star />}
                  <FuncIcon size={14} />{e.t}
                </Action>
              )
            )}
          </MenuList>
          <Thumb $mt={134} $mr={5} />
        </MenuBody>
      </Menu>

      <Tooltip>
        <p>从玩家控制器所处理输入的堆栈中移除此actor。</p>
        <p>目标是Actor</p>
        <small>长按（Alt）查看原生节点命名</small>
      </Tooltip>

      <ImeBar>
        <ImeLogo>王</ImeLogo>
        <svg {...imeProps} stroke="none" fill="#b5cff5"><circle cx="5" cy="6" r="3" /><path d="M11 10h4q0 5-4 7 2-3 0-7z" /></svg>
        <svg {...imeProps}><circle cx="10" cy="10" r="8.500" /><path d="M5.500 11q4.500 6 9 0M7 6v2.500M13 6v2.500" /></svg>
        <svg {...imeProps}><path d="M2 19h16" /><path d="M2 15l1-4L12 2l3 3-9 9z" fill="currentColor" /></svg>
        <svg {...imeProps}><path d="M3 2l11 12M17 2L6 14" strokeWidth="2.400" /><circle cx="4" cy="16" r="2.500" /><circle cx="16" cy="16" r="2.500" /></svg>
        <svg {...imeProps}><path d="M5 17a4 4 0 01-1-7.500 6 6 0 0112 0A4 4 0 0115 17z" strokeWidth="2.200" /></svg>
        <svg {...imeProps} stroke="none"><rect x="0" y="3" width="20" height="15" rx="2" fill="currentColor" /><path d="M3 7h14M3 10.500h14" stroke="#fff" strokeDasharray="2 1.500" /><path d="M5 14.500h10" stroke="#fff" strokeWidth="1.600" /></svg>
        <svg {...imeProps} stroke="none" fill="#b5cff5"><circle cx="10" cy="6" r="4" /><path d="M3 18v-3q0-4 4-4h6q4 0 4 4v3z" /></svg>
        <svg {...imeProps} viewBox="0 0 20 20" overflow="visible" stroke="none"><path d="M6 3l4 2 4-2 6 4-2 5-3-1v8H5v-8l-3 1-2-5z" fill="currentColor" /><circle cx="19" cy="0" r="4.500" fill="#f24b2e" /></svg>
        <ImeMode>简</ImeMode>
        <svg {...imeProps}><path d="M10 1l3 3 4-.5.500 4L20 10l-2.500 2.500-.5 4-4-.5-3 3-3-3-4 .5-.5-4L0 10l2.500-2.500.5-4 4 .5z" fill="currentColor" stroke="none" /><circle cx="10" cy="10" r="3.200" fill="#fff" stroke="none" /></svg>
      </ImeBar>
    </Shell>
  );
}
